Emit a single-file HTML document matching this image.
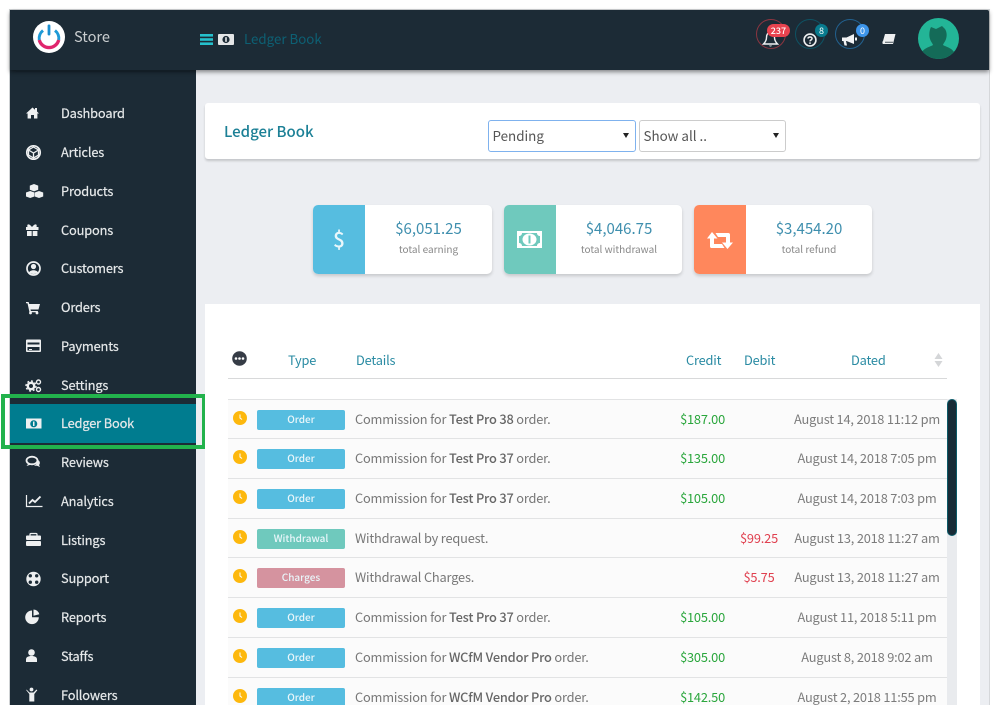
<!DOCTYPE html>
<html><head><meta charset="utf-8"><title>Ledger Book</title>
<style>
html,body{margin:0;padding:0;background:#fff;width:1000px;height:705px;overflow:hidden}
*{box-sizing:border-box}
body{font-family:"Noto Sans CJK JP","Liberation Sans",sans-serif;font-size:13px;color:#777;position:relative}
.a,.t,svg.i{position:absolute}
.t{white-space:nowrap;line-height:20px;height:20px}
#wrap{position:absolute;left:0;top:0;width:1000px;height:705px;overflow:hidden}
.m{left:61px;color:#e6e9ea;font-size:12.8px;letter-spacing:-.15px;-webkit-text-stroke:.2px #e6e9ea}
.r{position:absolute;left:228px;width:719px;height:40px;border-top:1px solid #e2e3e4;background:#fbfbfb}
.badge{position:absolute;left:29px;top:10px;width:88px;height:20px;border-radius:2px;color:#e9f6fa;font-size:10px;font-weight:500;line-height:18px;text-align:center}
.clk{position:absolute;left:5px;top:11px;width:14px;height:14px}
.d{position:absolute;left:127px;top:9px;line-height:20px;font-size:12.8px;letter-spacing:-.18px;color:#777;white-space:nowrap}
.d b{font-weight:500;color:#666}
.c{position:absolute;top:9px;line-height:20px;font-size:12.8px;letter-spacing:-.18px;white-space:nowrap}
.g{color:#2aa63c;right:222px}
.red{color:#e0404f;left:491px;width:80px;text-align:center}
.dt{position:absolute;top:9px;right:-35px;width:230px;text-align:center;line-height:20px;font-size:12.8px;letter-spacing:-.18px;color:#7c7c7c;white-space:nowrap}
.th{color:#2a8ba3;font-size:12.8px;letter-spacing:-.18px}
.card{position:absolute;top:205px;height:69px;background:#fff;border-radius:5px;box-shadow:0 2px 3px rgba(0,0,0,.16);overflow:hidden}
.card .ic{position:absolute;left:0;top:0;width:52px;height:69px}
.card .v{position:absolute;left:52px;right:0;top:13px;text-align:center;font-size:15px;line-height:22px;color:#3f8fae}
.card .l{position:absolute;left:52px;right:0;top:35px;text-align:center;font-size:10px;line-height:18px;color:#888}
.sel{position:absolute;top:120px;height:32px;background:#fff;border-radius:3px;font-size:13.4px;line-height:28px;color:#555;padding-left:3.5px}
.sel:after{content:"";position:absolute;right:6px;top:12px;border-left:3.5px solid transparent;border-right:3.5px solid transparent;border-top:5px solid #222}
.ring{position:absolute;width:30px;height:30px;border-radius:50%;border:1.5px solid;top:19px}
.num{position:absolute;height:13px;border-radius:7px;color:#fff;font-size:9px;line-height:13px;text-align:center}
</style></head><body>
<div id="wrap">
<!-- frame -->
<div class="a" style="left:9px;top:9px;width:981px;height:700px;background:#cfd2d4"></div>
<div class="a" style="left:196px;top:70px;width:794px;height:640px;background:#eceef2"></div>
<div class="a" style="left:989px;top:70px;width:1px;height:640px;background:#d5d7da"></div>
<div class="a" style="left:10px;top:10px;width:186px;height:700px;background:#1c2b36"></div>
<div class="a" style="left:10px;top:10px;width:979px;height:60px;background:#1c2b36;box-shadow:0 2px 4px rgba(0,0,0,.45);border-radius:2px 2px 0 0"></div>
<div class="a" style="left:16px;top:70px;width:174px;height:2px;background:#121d25"></div>

<!-- logo -->
<div class="a" style="left:33px;top:21px;width:32px;height:32px;border-radius:50%;background:#fff"></div>
<svg class="i" style="left:33px;top:21px" width="32" height="32" viewBox="0 0 32 32">
<path d="M10 9.500A10 10 0 0 0 6.300 19" fill="none" stroke="#1e9ad6" stroke-width="3"/>
<path d="M22 9.500A10 10 0 0 1 25.700 19" fill="none" stroke="#1e9ad6" stroke-width="3"/>
<path d="M6.300 19A10 10 0 0 0 25.700 19" fill="none" stroke="#e0246c" stroke-width="3.400"/>
<rect x="14.600" y="3.500" width="2.800" height="11" rx="1.200" fill="#1a8fd0"/>
</svg>
<div class="t" style="left:74px;top:26px;height:22px;line-height:22px;font-size:14.600px;color:#c9cdcf">Store</div>

<!-- header crumbs -->
<svg class="i" style="left:200px;top:34px" width="13" height="11"><rect y="0" width="13" height="2.600" fill="#25c0cc"/><rect y="4.200" width="13" height="2.600" fill="#25c0cc"/><rect y="8.400" width="13" height="2.600" fill="#25c0cc"/></svg>
<svg class="i" style="left:218px;top:34px" width="16" height="11"><rect width="16" height="11" rx="1" fill="#e4e6e7"/><circle cx="8" cy="5.500" r="3.600" fill="#1c2b36"/><rect x="7.200" y="3.200" width="1.600" height="4.600" fill="#e4e6e7"/></svg>
<div class="t" style="left:244px;top:29px;font-size:13.300px;color:#0d6074">Ledger Book</div>

<!-- header icons -->
<div class="ring" style="left:756px;border-color:#8b3540"></div>
<svg class="i" style="left:762px;top:31px" width="17" height="17" viewBox="0 0 17 17"><path d="M8.500 1.500C5.500 1.500 4.500 4 4.500 6.500c0 3-1.500 5-3 6.500h14c-1.500-1.500-3-3.500-3-6.500 0-2.500-1-5-4-5z" fill="none" stroke="#eef0f1" stroke-width="1.400"/><path d="M7 14.500a1.600 1.600 0 0 0 3 0z" fill="#eef0f1"/></svg>
<div class="num" style="left:767px;top:24px;width:23px;background:#e8434f;font-weight:500">237</div>
<div class="ring" style="left:795px;border-color:#0e5263"></div>
<svg class="i" style="left:803px;top:33px" width="14" height="14" viewBox="0 0 13 13"><circle cx="6.500" cy="6.500" r="5.500" fill="none" stroke="#eef0f1" stroke-width="1.500"/><path d="M4.600 5.200c.2-2 3.800-2 3.800 0 0 1.300-1.900 1.200-1.900 2.600" fill="none" stroke="#eef0f1" stroke-width="1.400"/><rect x="5.800" y="8.700" width="1.400" height="1.400" fill="#eef0f1"/></svg>
<div class="num" style="left:815px;top:24px;width:13px;background:#087b8e">8</div>
<div class="ring" style="left:835px;border-color:#22618f"></div>
<svg class="i" style="left:841px;top:33px" width="17" height="14" viewBox="0 0 17 14"><path d="M1 4.500h4.500L13 1v10L5.500 8H5l1 4.500H3.500L2.500 8H1z" fill="#f2f3f4"/><rect x="14" y="4.500" width="2" height="3" fill="#f2f3f4"/></svg>
<div class="num" style="left:856px;top:24px;width:13px;background:#3d95ea">0</div>
<svg class="i" style="left:882px;top:33px" width="14" height="13" viewBox="0 0 14 13"><path d="M3 1h10.500L11 11H1.200C.2 11 .2 8.500 1 8z" fill="#eef0f1"/><path d="M3 9.200h8" stroke="#1c2b36" stroke-width=".8"/></svg>
<div class="a" style="left:918px;top:18px;width:41px;height:41px;border-radius:50%;background:#23b597;overflow:hidden">
<svg width="41" height="41" viewBox="0 0 41 41"><path d="M13 9l5 2 6-3 3 3c2 3 2 7 1 10-1 3-3 5-3 6 3 2 10 3 12 9v6H3v-6c2-6 9-7 12-9 0-1-2-3-3-6-1-3-1-8 1-12z" fill="#146b58"/></svg>
</div>

<!-- sidebar -->
<div class="a" style="left:10px;top:404px;width:186px;height:39px;background:#007c8f"></div>
<div class="t m" style="top:103px">Dashboard</div>
<div class="t m" style="top:142px">Articles</div>
<div class="t m" style="top:181px">Products</div>
<div class="t m" style="top:220px">Coupons</div>
<div class="t m" style="top:258px">Customers</div>
<div class="t m" style="top:297px">Orders</div>
<div class="t m" style="top:336px">Payments</div>
<div class="t m" style="top:375px">Settings</div>
<div class="t m" style="top:413px">Ledger Book</div>
<div class="t m" style="top:452px">Reviews</div>
<div class="t m" style="top:491px">Analytics</div>
<div class="t m" style="top:530px">Listings</div>
<div class="t m" style="top:568px">Support</div>
<div class="t m" style="top:607px">Reports</div>
<div class="t m" style="top:646px">Staffs</div>
<div class="t m" style="top:685px">Followers</div>

<svg class="i" style="left:0;top:0" width="60" height="705" fill="#eef0f1">
<path d="M26 113.500l6.500-6 2.500 2.200v-1.700h2v3.500l2 2h-1.600v5h-3.400v-3.500h-3v3.500h-3.400v-5z"/>
<circle cx="33.500" cy="152.500" r="6.700" fill="none" stroke="#eef0f1" stroke-width="1.700"/>
<path d="M33.500 147l5 3v5l-5 3-5-3v-5z M28.500 150l5 3 5-3 M33.500 153v5" fill="none" stroke="#eef0f1" stroke-width="1.300"/>
<g><path d="M34 184l4.200 1.600v4.200L34 191.400l-4.200-1.600v-4.200z"/><path d="M30.200 191l4.200 1.500v4L30.200 198l-4.200-1.500v-4z"/><path d="M39 191l4.200 1.500v4L39 198l-4.200-1.500v-4z"/></g>
<g><rect x="26" y="227" width="12.500" height="3"/><rect x="27" y="231" width="4.700" height="5"/><rect x="32.700" y="231" width="4.700" height="5"/><path d="M32 227c-3-4-5.500-3-4.500 0zM32 227c3-4 5.500-3 4.500 0z"/></g>
<g><circle cx="33.500" cy="268.500" r="6.500" fill="none" stroke="#eef0f1" stroke-width="1.700"/><circle cx="33.500" cy="266.500" r="2.600"/><path d="M29 272.500c1-3 8-3 9 0-2 2-7 2-9 0z"/></g>
<g><path d="M26 302h2.600l.6 2H40l-1.500 5.500H30.500l.4 1.500h7v1.300H29.500L27.500 303.300H26z"/><circle cx="30.500" cy="313" r="1.400"/><circle cx="37" cy="313" r="1.400"/></g>
<g><path fill-rule="evenodd" d="M27 339.500h13a1 1 0 0 1 1 1v10.500a1 1 0 0 1-1 1H27a1 1 0 0 1-1-1v-10.500a1 1 0 0 1 1-1zm.500 3v2h12v-2zm0 4.500V350.500h12V347z"/><rect x="29" y="349" width="3" height="1"/></g>
<g><circle cx="31" cy="386" r="3.200" fill="none" stroke="#eef0f1" stroke-width="2.400"/><circle cx="31" cy="386" r="5" fill="none" stroke="#eef0f1" stroke-width="1.400" stroke-dasharray="2 1.900"/><circle cx="38.500" cy="382" r="2" fill="none" stroke="#eef0f1" stroke-width="1.400"/><circle cx="38.500" cy="389.500" r="2" fill="none" stroke="#eef0f1" stroke-width="1.400"/></g>
<g><path fill-rule="evenodd" d="M26 418.500h15.500v10H26zM33.700 420.300a3.500 3.500 0 1 0 .1 0z"/><rect x="33" y="421.500" width="1.500" height="4.500"/></g>
<g><ellipse cx="32" cy="460.500" rx="5.500" ry="3.800" fill="none" stroke="#eef0f1" stroke-width="1.800"/><path d="M28 464l-1.500 2 4-1.200zM38 460c2 1 2.500 3.500 1 5l1 2-3-1.300h-3c2-1 4-3 4-5.700z"/></g>
<g fill="none" stroke="#eef0f1"><path d="M26.500 495v11.500H42.500" stroke-width="1.200"/><path d="M29 503.500l3.500-3.500 2.500 2 5.500-5.500" stroke-width="1.900"/></g>
<g><rect x="30" y="533.500" width="7" height="3" rx="1" fill="none" stroke="#eef0f1" stroke-width="1.200"/><rect x="26" y="535.500" width="15" height="4.500" rx="1"/><rect x="26" y="541" width="15" height="5" rx="1"/></g>
<g><circle cx="33.500" cy="579" r="7.200"/><g fill="#1c2b36"><circle cx="30.300" cy="575.800" r="1.700"/><circle cx="36.700" cy="575.800" r="1.700"/><circle cx="30.300" cy="582.200" r="1.700"/><circle cx="36.700" cy="582.200" r="1.700"/></g></g>
<g><path d="M32 610.500a6.800 6.800 0 1 0 6.800 6.800H32z"/><path d="M33.500 609.500a6 6 0 0 1 5.800 4.800l-5.800 1.500z"/></g>
<g><circle cx="31.500" cy="652.500" r="3.300"/><path d="M26 662v-2.500c0-2.500 2.200-3.500 5.500-3.500s5.500 1 5.500 3.500v2.500z"/></g>
<g><circle cx="31.500" cy="689.500" r="1.900"/><path d="M26.500 689.500l3 3h4l3-3 .8.800-3 3.700v7.500h-5V694l-3-3.700z"/></g>
</svg>

<!-- green highlight -->
<div class="a" style="left:1px;top:394px;width:205px;height:55px;border:4px solid #22b24c"></div>

<!-- title panel -->
<div class="a" style="left:205px;top:103px;width:775px;height:56px;background:#fff;border-radius:3px;box-shadow:0 2px 2px rgba(0,0,0,.17)"></div>
<div class="t" style="left:224px;top:121px;height:22px;line-height:22px;font-size:15px;font-weight:500;color:#1c8096">Ledger Book</div>
<div class="sel" style="left:488px;width:148px;border:1.500px solid #7fb2ee">Pending</div>
<div class="sel" style="left:639px;width:147px;border:1px solid #ccc">Show all ..</div>

<!-- cards -->
<div class="card" style="left:313px;width:179px"><div class="ic" style="background:#56bde0"></div>
<div class="a" style="left:0;top:21px;width:52px;text-align:center;font-size:21px;font-weight:500;line-height:26px;color:#eaf7fb">$</div>
<div class="v">$6,051.25</div><div class="l">total earning</div></div>
<div class="card" style="left:504px;width:178px"><div class="ic" style="background:#6fc9bd"></div>
<svg class="i" style="left:13px;top:26px" width="25" height="17" viewBox="0 0 25 17"><path fill="#fff" fill-rule="evenodd" d="M0 0h25v17H0zM5 2c0 2-1.500 3-3 3v7c1.500 0 3 1 3 3h15c0-2 1.500-3 3-3V5c-1.500 0-3-1-3-3z"/><ellipse cx="12.500" cy="8.500" rx="7" ry="6" fill="#fff"/><rect x="11.500" y="4.500" width="2" height="8" fill="#6fc9bd"/></svg>
<div class="v">$4,046.75</div><div class="l">total withdrawal</div></div>
<div class="card" style="left:694px;width:178px"><div class="ic" style="background:#ff875c"></div>
<svg class="i" style="left:13px;top:27px" width="26" height="17" viewBox="0 0 26 17"><path fill="#fff" d="M5 0l5.500 6.500H7V12h8l2.500 4H4.800a1.800 1.800 0 0 1-1.800-1.800V6.500H0zM8.500 1H21.200A1.800 1.800 0 0 1 23 2.800V10.500H26L20.500 17 15 10.500H19V5H11z"/></svg>
<div class="v">$3,454.20</div><div class="l">total refund</div></div>

<!-- table panel -->
<div class="a" style="left:205px;top:304px;width:775px;height:410px;background:#fff"></div>
<svg class="i" style="left:232px;top:351px" width="15" height="15"><circle cx="7.500" cy="7.500" r="7.300" fill="#363c46"/><circle cx="4" cy="7.500" r="1.300" fill="#fff"/><circle cx="7.500" cy="7.500" r="1.300" fill="#fff"/><circle cx="11" cy="7.500" r="1.300" fill="#fff"/></svg>
<div class="t th" style="left:288px;top:350px">Type</div>
<div class="t th" style="left:356px;top:350px">Details</div>
<div class="t th" style="left:686px;top:350px">Credit</div>
<div class="t th" style="left:744px;top:350px">Debit</div>
<div class="t th" style="left:851px;top:350px">Dated</div>
<svg class="i" style="left:934px;top:353px" width="9" height="14" fill="#d4d6d8"><path d="M4.500 0L8.500 6H.5zM4.500 14L.5 8h8z"/></svg>
<div class="a" style="left:228px;top:378px;width:719px;height:1px;background:#d8d9da"></div>

<div class="r" style="top:399px"><svg class="clk" viewBox="0 0 14 14"><circle cx="7" cy="7" r="7" fill="#fdb80d"/><path d="M7 3.500V7l2 1.500" fill="none" stroke="#fff" stroke-width="1"/></svg><div class="badge" style="background:#56bde0">Order</div><div class="d">Commission for <b>Test Pro 38</b> order.</div><div class="c g">$187.00</div><div class="dt">August 14, 2018 11:12 pm</div></div>
<div class="r" style="top:438px;height:41px"><svg class="clk" viewBox="0 0 14 14"><circle cx="7" cy="7" r="7" fill="#fdb80d"/><path d="M7 3.500V7l2 1.500" fill="none" stroke="#fff" stroke-width="1"/></svg><div class="badge" style="background:#56bde0">Order</div><div class="d">Commission for <b>Test Pro 37</b> order.</div><div class="c g">$135.00</div><div class="dt">August 14, 2018 7:05 pm</div></div>
<div class="r" style="top:478px"><svg class="clk" viewBox="0 0 14 14"><circle cx="7" cy="7" r="7" fill="#fdb80d"/><path d="M7 3.500V7l2 1.500" fill="none" stroke="#fff" stroke-width="1"/></svg><div class="badge" style="background:#56bde0">Order</div><div class="d">Commission for <b>Test Pro 37</b> order.</div><div class="c g">$105.00</div><div class="dt">August 14, 2018 7:03 pm</div></div>
<div class="r" style="top:518px"><svg class="clk" viewBox="0 0 14 14"><circle cx="7" cy="7" r="7" fill="#fdb80d"/><path d="M7 3.500V7l2 1.500" fill="none" stroke="#fff" stroke-width="1"/></svg><div class="badge" style="background:#6fc9bd">Withdrawal</div><div class="d">Withdrawal by request.</div><div class="c red">$99.25</div><div class="dt">August 13, 2018 11:27 am</div></div>
<div class="r" style="top:557px;height:41px"><svg class="clk" viewBox="0 0 14 14"><circle cx="7" cy="7" r="7" fill="#fdb80d"/><path d="M7 3.500V7l2 1.500" fill="none" stroke="#fff" stroke-width="1"/></svg><div class="badge" style="background:#d5939f">Charges</div><div class="d">Withdrawal Charges.</div><div class="c red">$5.75</div><div class="dt">August 13, 2018 11:27 am</div></div>
<div class="r" style="top:597px"><svg class="clk" viewBox="0 0 14 14"><circle cx="7" cy="7" r="7" fill="#fdb80d"/><path d="M7 3.500V7l2 1.500" fill="none" stroke="#fff" stroke-width="1"/></svg><div class="badge" style="background:#56bde0">Order</div><div class="d">Commission for <b>Test Pro 37</b> order.</div><div class="c g">$105.00</div><div class="dt">August 11, 2018 5:11 pm</div></div>
<div class="r" style="top:637px"><svg class="clk" viewBox="0 0 14 14"><circle cx="7" cy="7" r="7" fill="#fdb80d"/><path d="M7 3.500V7l2 1.500" fill="none" stroke="#fff" stroke-width="1"/></svg><div class="badge" style="background:#56bde0">Order</div><div class="d">Commission for <b>WCfM Vendor Pro</b> order.</div><div class="c g">$305.00</div><div class="dt">August 8, 2018 9:02 am</div></div>
<div class="r" style="top:677px"><svg class="clk" viewBox="0 0 14 14"><circle cx="7" cy="7" r="7" fill="#fdb80d"/><path d="M7 3.500V7l2 1.500" fill="none" stroke="#fff" stroke-width="1"/></svg><div class="badge" style="background:#56bde0">Order</div><div class="d">Commission for <b>WCfM Vendor Pro</b> order.</div><div class="c g">$142.50</div><div class="dt">August 2, 2018 11:55 pm</div></div>

<!-- scrollbar -->
<div class="a" style="left:947px;top:399px;width:10px;height:310px;background:#e9ebee"></div>
<div class="a" style="left:947px;top:399px;width:10px;height:137px;background:#182b36;border-radius:5px;border:1px solid #0b5a68"></div>
</div>
</body></html>
